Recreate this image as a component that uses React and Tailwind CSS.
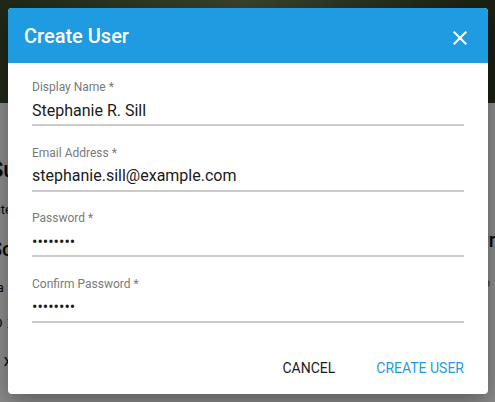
const fields = [
  { label: 'Display Name *', value: 'Stephanie R. Sill', type: 'text' },
  { label: 'Email Address *', value: 'stephanie.sill@example.com', type: 'text' },
  { label: 'Password *', value: 'password', type: 'password' },
  { label: 'Confirm Password *', value: 'password', type: 'password' },
];

function Field({ label, value, type }) {
  return (
    <div className="flex flex-col">
      <label className="text-[12px] leading-[14px] text-[#7a7a7a]">{label}</label>
      <input
        type={type}
        defaultValue={value}
        readOnly
        className="mt-[5px] h-[27px] w-full border-b-2 border-[#cbcbcb] bg-transparent pb-[3px] text-[16px] text-[#1a1a1a] outline-none"
      />
    </div>
  );
}

export default function App() {
  return (
    <div className="relative h-[402px] w-[495px] overflow-hidden bg-white" style={{ fontFamily: 'Roboto, "Liberation Sans", sans-serif' }}>
      {/* page behind the dialog */}
      <div className="flex flex-col">
        <div className="h-[103px] bg-gradient-to-r from-[#3a4a2a] via-[#6b7a55] to-[#2e3a22]" />
        <div className="flex justify-between pt-[50px] text-[#111]">
          <div className="-ml-[10px] flex flex-col gap-[14px]">
            <span className="text-[22px] font-medium">Sup</span>
            <span className="text-[13px]">Intern</span>
            <span className="text-[20px] font-medium">Sous</span>
            <span className="text-[13px]">- a</span>
            <span className="text-[16px]">⊖ x</span>
            <span className="text-[16px]">■ x</span>
          </div>
          <div className="-mr-[12px] flex flex-col gap-[18px] pt-[72px]">
            <span className="text-[20px] font-medium">Pro</span>
            <span className="text-[13px] text-[#666]">co</span>
          </div>
        </div>
        <div className="pl-[2px] pt-[30px] text-[13px] text-[#111]">● SST Hawley - 10.204.123</div>
      </div>

      {/* overlay */}
      <div className="absolute inset-0 bg-black/45" />

      {/* dialog */}
      <div className="absolute left-[8px] top-[8px] w-[480px] overflow-hidden rounded-[4px] bg-white shadow-[0_8px_24px_rgba(0,0,0,0.35)]">
        <div className="flex h-[55px] items-center justify-between bg-[#1e9be1] pl-[16px] pr-[16px]">
          <h2 className="text-[20px] font-medium text-white">Create User</h2>
          <svg viewBox="0 0 24 24" className="mt-[4px] h-[24px] w-[24px] fill-white">
            <path d="M19 6.41L17.59 5 12 10.59 6.41 5 5 6.41 10.59 12 5 17.59 6.41 19 12 13.41 17.59 19 19 17.59 13.41 12z" />
          </svg>
        </div>
        <div className="flex flex-col gap-[19.5px] px-[24px] pt-[17px]">
          {fields.map((f) => (
            <Field key={f.label} {...f} />
          ))}
        </div>
        <div className="flex justify-end gap-[41px] px-[24px] pb-[15px] pt-[35px]">
          <button className="text-[14px] text-[#1a1a1a]">CANCEL</button>
          <button className="text-[14px] text-[#1e9be1]">CREATE USER</button>
        </div>
      </div>
    </div>
  );
}
